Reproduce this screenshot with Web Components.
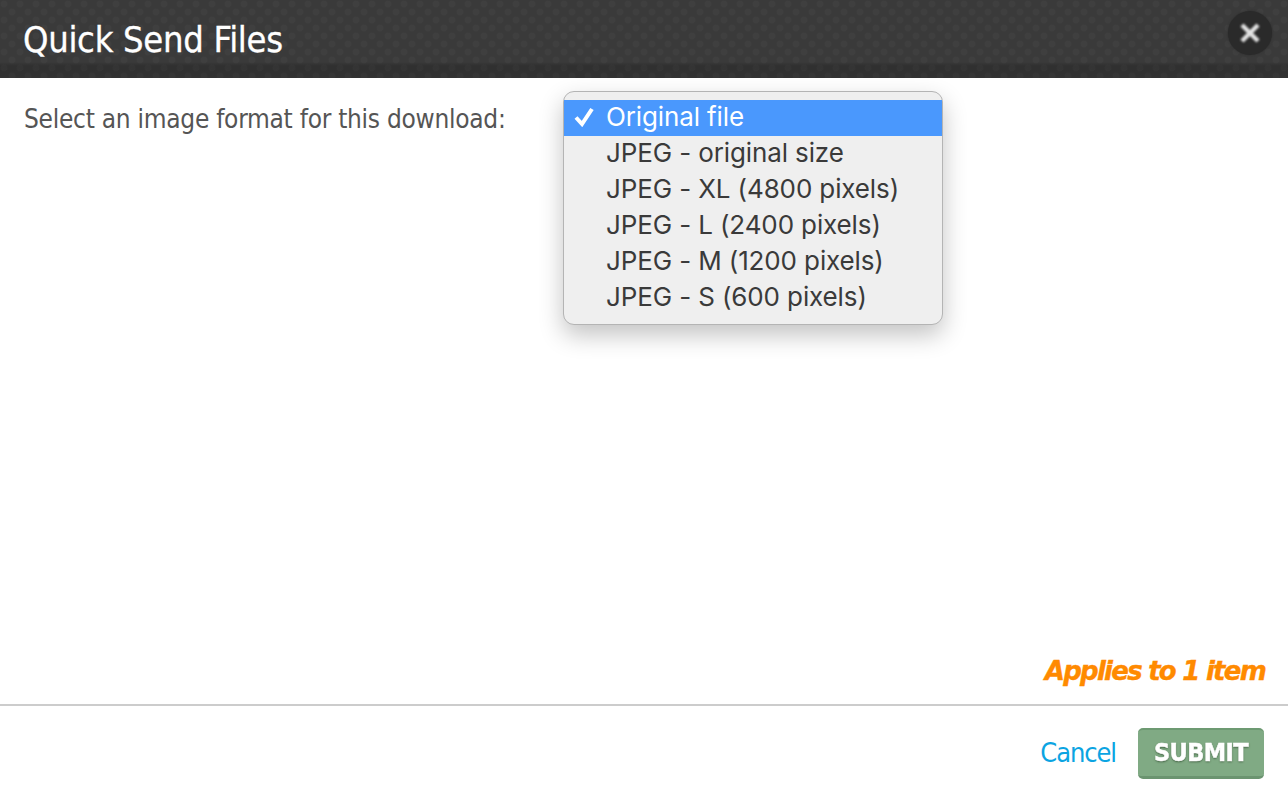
<!DOCTYPE html>
<html>
<head>
<meta charset="utf-8">
<title>Quick Send Files</title>
<style>
  html, body { margin: 0; height: 100%; background: #fff; }
  body { font-family: "DejaVu Sans", sans-serif; }
</style>
</head>
<body>
<send-dialog heading="Quick Send Files">
  <format-picker label="Select an image format for this download:">
    <format-option selected>Original file</format-option>
    <format-option>JPEG - original size</format-option>
    <format-option>JPEG - XL (4800 pixels)</format-option>
    <format-option>JPEG - L (2400 pixels)</format-option>
    <format-option>JPEG - M (1200 pixels)</format-option>
    <format-option>JPEG - S (600 pixels)</format-option>
  </format-picker>
  <span slot="note">Applies to 1 item</span>
</send-dialog>

<script>
class SendDialog extends HTMLElement {
  constructor() {
    super();
    this.attachShadow({ mode: 'open' });
    this.shadowRoot.innerHTML = `
      <style>
        :host {
          display: flex;
          flex-direction: column;
          height: 796px;
          overflow: hidden;
        }
        header {
          height: 78px;
          flex: none;
          box-sizing: border-box;
          display: flex;
          align-items: center;
          justify-content: space-between;
          padding: 0 16px 0 23px;
          background-color: #3a3a3a;
          background-image:
            linear-gradient(to bottom, rgba(0,0,0,0) 62px, rgba(0,0,0,0.18) 66px, rgba(0,0,0,0.14) 78px),
            radial-gradient(circle at 4px 4px, rgba(255,255,255,0.022) 3px, transparent 4px),
            radial-gradient(circle at 12px 12px, rgba(255,255,255,0.022) 3px, transparent 4px);
          background-size: 100% 100%, 16px 16px, 16px 16px;
        }
        h1 {
          margin: 2px 0 0;
          font: 400 36px/1 "DejaVu Sans", sans-serif;
          font-stretch: condensed;
          letter-spacing: -0.3px;
          color: #fff;
          -webkit-text-stroke: 0.3px #fff;
        }
        .close {
          width: 44px;
          height: 44px;
          flex: none;
          border: 0;
          padding: 0;
          margin-bottom: 12px;
          border-radius: 50%;
          background: #2a2a2a;
          box-shadow: 0 0 2px #2a2a2a;
          display: flex;
          align-items: center;
          justify-content: center;
        }
        .close svg { filter: blur(0.8px); }
        main {
          flex: 1;
          min-height: 0;
          padding: 24px 24px 0;
          position: relative;
          box-sizing: border-box;
        }
        .note {
          display: flex;
          justify-content: flex-end;
          height: 49px;
          flex: none;
          box-sizing: border-box;
          padding: 1px 23px 0 0;
          font: italic 700 26px/30px "DejaVu Sans", sans-serif;
          letter-spacing: -1.75px;
          color: #ff8a00;
          -webkit-text-stroke: 0.4px #ff8a00;
        }
        footer {
          height: 92px;
          flex: none;
          box-sizing: border-box;
          border-top: 2px solid #cccccc;
          display: flex;
          align-items: flex-start;
          justify-content: flex-end;
          gap: 22px;
          padding: 22px 24px 0 0;
        }
        a {
          color: #0ba4e2;
          font: 400 27px/50px "DejaVu Sans", sans-serif;
          font-stretch: condensed;
          letter-spacing: -1.1px;
          text-decoration: none;
        }
        .submit {
          width: 126px;
          height: 51px;
          box-sizing: border-box;
          padding: 0 0 2px;
          border: 0;
          border-top: 2px solid #6d9a72;
          border-bottom: 3px solid #6b9470;
          border-radius: 5px;
          background: #80aa84;
          color: #fff;
          font: 700 25px/1 "DejaVu Sans", sans-serif;
          font-stretch: condensed;
          letter-spacing: -0.6px;
        }
        .submit span {
          display: inline-block;
          filter: blur(0.6px);
          text-shadow: 0 1px 2px rgba(50,80,50,0.9);
          -webkit-text-stroke: 0.5px #fff;
        }
      </style>
      <header>
        <h1></h1>
        <button class="close" aria-label="Close">
          <svg width="24" height="24" viewBox="0 0 24 24">
            <path d="M4 4 L20 20 M20 4 L4 20" stroke="#e2e2e2" stroke-width="4.4" fill="none"/>
          </svg>
        </button>
      </header>
      <main><slot></slot></main>
      <div class="note"><slot name="note"></slot></div>
      <footer>
        <a href="#">Cancel</a>
        <button class="submit"><span>SUBMIT</span></button>
      </footer>
    `;
  }

  connectedCallback() {
    this.shadowRoot.querySelector('h1').textContent = this.getAttribute('heading');
  }
}

class FormatPicker extends HTMLElement {
  constructor() {
    super();
    this.attachShadow({ mode: 'open' });
    this.shadowRoot.innerHTML = `
      <style>
        :host {
          display: block;
          position: relative;
        }
        label {
          font: 400 26px/34px "DejaVu Sans", sans-serif;
          font-stretch: condensed;
          letter-spacing: -0.27px;
          color: #555;
        }
        .menu {
          position: absolute;
          left: 539px;
          top: -11px;
          width: 380px;
          height: 234px;
          box-sizing: border-box;
          padding: 8px 0;
          background: #efefef;
          border: 1px solid #b4b4b4;
          border-radius: 11px;
          box-shadow: 0 10px 24px rgba(0,0,0,0.24);
        }
      </style>
      <label></label>
      <div class="menu"><slot></slot></div>
    `;
  }

  connectedCallback() {
    this.shadowRoot.querySelector('label').textContent = this.getAttribute('label');
  }
}

class FormatOption extends HTMLElement {
  constructor() {
    super();
    this.attachShadow({ mode: 'open' });
    this.shadowRoot.innerHTML = `
      <style>
        :host {
          display: flex;
          align-items: center;
          box-sizing: border-box;
          height: 36px;
          padding: 0 0 2px 42px;
          position: relative;
          font: 400 26px/34px Inter, "Liberation Sans", sans-serif;
          letter-spacing: -0.12px;
          color: #3a3a3a;
        }
        :host([selected]) {
          background: #4a98fd;
          color: #fff;
        }
        svg {
          display: none;
          position: absolute;
          left: 10px;
          top: 7px;
        }
        :host([selected]) svg { display: block; }
      </style>
      <svg width="21" height="20" viewBox="0 0 21 20">
        <path d="M2 10.5 L8 17 L18 2" stroke="#fff" stroke-width="4" fill="none"/>
      </svg>
      <slot></slot>
    `;
  }
}

customElements.define('send-dialog', SendDialog);
customElements.define('format-picker', FormatPicker);
customElements.define('format-option', FormatOption);
</script>
</body>
</html>
